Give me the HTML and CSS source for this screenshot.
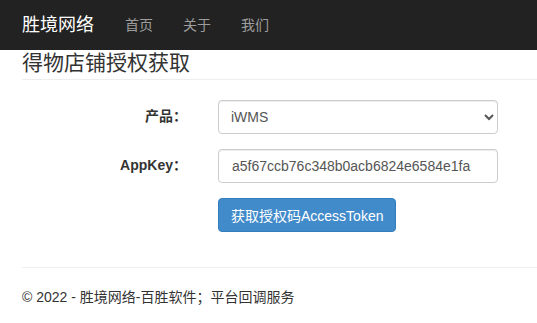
FILE: index.html
```html
<!DOCTYPE html>
<html lang="zh-CN">
<head>
    <meta charset="UTF-8">
    <meta name="viewport" content="width=device-width, initial-scale=1.0">
    <title>得物店铺授权获取</title>
    <link rel="stylesheet" href="styles.css">
</head>
<body>
    <div class="navbar">
        <a class="brand" href="#">胜境网络</a>
        <ul class="nav">
            <li><a href="#">首页</a></li>
            <li><a href="#">关于</a></li>
            <li><a href="#">我们</a></li>
        </ul>
    </div>

    <div class="container">
        <h3 class="page-title">得物店铺授权获取</h3>
        <hr>

        <form class="auth-form">
            <div class="form-row">
                <label for="product">产品：</label>
                <select id="product" class="form-control">
                    <option>iWMS</option>
                </select>
            </div>
            <div class="form-row">
                <label for="appkey">AppKey：</label>
                <input id="appkey" type="text" class="form-control" value="a5f67ccb76c348b0acb6824e6584e1fa">
            </div>
            <div class="form-row">
                <span></span>
                <button type="button" class="btn-primary">获取授权码AccessToken</button>
            </div>
        </form>

        <hr class="footer-line">
        <footer>
            <p>© 2022 - 胜境网络-百胜软件；平台回调服务</p>
        </footer>
    </div>
</body>
</html>
```

FILE: styles.css
```css
body {
    margin: 0;
    font-family: "Liberation Sans", "Noto Sans CJK SC", sans-serif;
    font-size: 14px;
    line-height: 1.42857;
    color: #333;
    background-color: #fff;
}

a {
    text-decoration: none;
}

.navbar {
    display: flex;
    align-items: center;
    height: 50px;
    background-color: #222;
    padding-left: 22px;
}

.brand {
    color: #fff;
    font-size: 18px;
    line-height: 20px;
    padding-right: 16px;
}

.nav {
    display: flex;
    list-style: none;
    margin: 0;
    padding: 0;
}

.nav li a {
    display: block;
    padding: 0 15px;
    color: #9d9d9d;
    line-height: 20px;
}

.container {
    padding-left: 22px;
}

.page-title {
    margin: 1px 0 0;
    font-size: 21px;
    font-weight: normal;
    line-height: 24px;
}

hr {
    margin: 4px 0 0;
    border: 0;
    border-top: 1px solid #eee;
}

.auth-form {
    display: flex;
    flex-direction: column;
    gap: 15px;
    padding-top: 20px;
}

.form-row {
    display: grid;
    grid-template-columns: 196px 280px;
    align-items: center;
}

.form-row label {
    font-weight: bold;
    text-align: right;
    padding-right: 31px;
}

.form-control {
    box-sizing: border-box;
    height: 34px;
    width: 280px;
    padding: 6px 12px;
    font-family: inherit;
    font-size: 14px;
    color: #555;
    background-color: #fff;
    border: 1px solid #ccc;
    border-radius: 4px;
    box-shadow: inset 0 1px 1px rgba(0, 0, 0, 0.075);
}

select.form-control {
    padding-left: 8px;
}

input.form-control {
    padding-left: 13px;
}

.btn-primary {
    justify-self: start;
    height: 34px;
    padding: 6px 12px;
    font-family: inherit;
    font-size: 14px;
    color: #fff;
    background-color: #428bca;
    border: 1px solid #357ebd;
    border-radius: 4px;
    cursor: pointer;
}

.footer-line {
    margin-top: 35px;
}

footer p {
    margin: 20px 0;
}
```
